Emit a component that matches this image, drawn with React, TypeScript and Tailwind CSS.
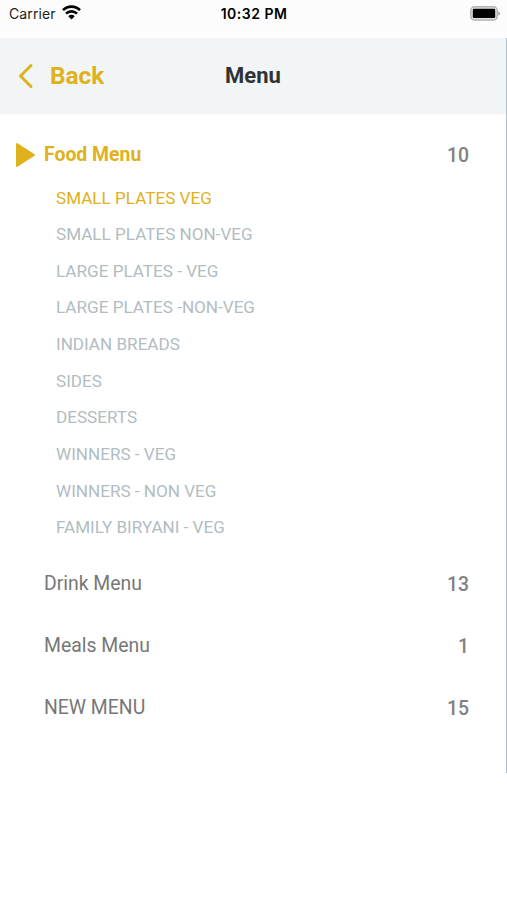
const foodItems = [
  "SMALL PLATES VEG",
  "SMALL PLATES NON-VEG",
  "LARGE PLATES - VEG",
  "LARGE PLATES -NON-VEG",
  "INDIAN BREADS",
  "SIDES",
  "DESSERTS",
  "WINNERS - VEG",
  "WINNERS - NON VEG",
  "FAMILY BIRYANI - VEG",
];

const otherMenus = [
  { name: "Drink Menu", count: 13 },
  { name: "Meals Menu", count: 1 },
  { name: "NEW MENU", count: 15 },
];

function StatusBar() {
  return (
    <div className="grid h-[38px] grid-cols-3 bg-[#fcfcfc] pt-[3px] pr-[6px] pl-[9px] font-['Inter',sans-serif] text-black">
      <div className="flex h-5 items-center gap-[6px]">
        <span className="pt-px text-[14px] tracking-[0.1px] text-[#222]">Carrier</span>
        <svg className="-mt-px" width="19" height="15" viewBox="0 0 19 15" fill="none" stroke="#000" strokeWidth="2.6">
          <path d="M1 5.2a12 12 0 0 1 17 0" />
          <path d="M4 8.6a7.8 7.8 0 0 1 11 0" />
          <path d="M9.5 14.4 6.3 11.2a4.5 4.5 0 0 1 6.4 0Z" fill="#000" stroke="none" />
        </svg>
      </div>
      <div className="flex h-5 items-center justify-center pr-[2px] text-[14px] font-semibold tracking-[0.5px] whitespace-nowrap">10:32 PM</div>
      <div className="flex h-5 items-center justify-end">
        <svg width="31" height="15" viewBox="0 0 31 15">
          <rect x="0.8" y="0.8" width="26.4" height="13.2" rx="3.8" fill="#e2e2e2" stroke="#b2b2b2" strokeWidth="1.4" />
          <rect x="2.8" y="2.8" width="22.4" height="9.2" rx="1.2" fill="#000" />
          <path d="M28.2 5.2c2.6.8 2.6 3.6 0 4.4Z" fill="#aaa" />
        </svg>
      </div>
    </div>
  );
}

export default function App() {
  return (
    <div className="h-[900px] w-[507px] overflow-hidden bg-white font-['Roboto',sans-serif]">
      <StatusBar />
      <main className="h-[735px] border-r border-[#b6c0cc]">
        <header className="grid h-[76px] grid-cols-3 items-center bg-[#f2f5f6]">
          <button className="flex items-center gap-4 pl-[18px] text-[24.4px] font-bold text-[#dfb11b]">
            <svg width="16" height="26" viewBox="0 0 16 26" fill="none" stroke="currentColor" strokeWidth="3" strokeLinecap="round" strokeLinejoin="round">
              <path d="M13 2.5 2.5 13 13 23.5" />
            </svg>
            <span className="pt-px">Back</span>
          </button>
          <h1 className="pb-[2px] text-center text-[22px] font-bold text-[#303234]">Menu</h1>
        </header>
        <section className="pt-[10px] pr-[37px]">
          <div className="flex h-[62px] items-center">
            <svg className="mr-[8px] ml-[15px]" width="21" height="26" viewBox="0 0 21 26" fill="#dfb11b" stroke="#dfb11b" strokeWidth="2" strokeLinejoin="round">
              <path d="M2 2v22L19 13Z" />
            </svg>
            <span className="flex-1 text-[19.4px] font-bold text-[#dfb11b]">Food Menu</span>
            <span className="pt-[2px] text-[19.4px] font-medium text-[#818181]">10</span>
          </div>
          <ul className="-mt-[6px] pl-[56px] text-[17.1px]">
            {foodItems.map((item, i) => (
              <li key={item} className={`flex h-[36.65px] items-center ${i === 0 ? "text-[#dfb11b]" : "text-[#b2bcc1]"}`}>
                {item}
              </li>
            ))}
          </ul>
          <div className="pt-[6px]">
            {otherMenus.map((m) => (
              <div key={m.name} className="flex h-[62.2px] items-center justify-between pl-[44px] text-[19.4px] text-[#777]">
                <span>{m.name}</span>
                <span className="pt-[2px] font-medium text-[#818181]">{m.count}</span>
              </div>
            ))}
          </div>
        </section>
      </main>
    </div>
  );
}
